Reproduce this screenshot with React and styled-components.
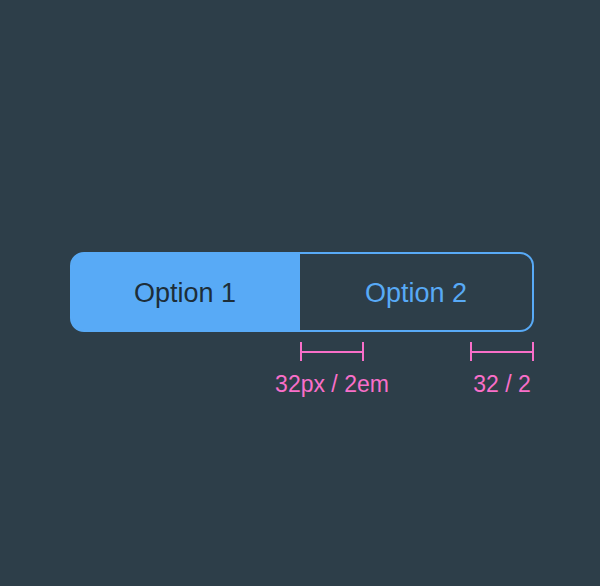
import React from 'react';
import styled, { createGlobalStyle } from 'styled-components';

const blue = '#58aaf6';
const pink = '#f96fc9';
const bg = '#2d3e49';

const Global = createGlobalStyle`
  html, body {
    margin: 0;
    padding: 0;
    background: ${bg};
  }
  body {
    font-family: "Liberation Sans", Arial, sans-serif;
  }
`;

const Page = styled.div`
  width: 600px;
  height: 586px;
  box-sizing: border-box;
  padding: 252px 0 0 70px;
  display: flex;
  flex-direction: column;
  align-items: flex-start;
`;

const Segmented = styled.div`
  display: flex;
  width: 464px;
  height: 80px;
`;

const Segment = styled.button`
  box-sizing: border-box;
  height: 80px;
  margin: 0;
  padding: 3px 0 0;
  font-family: inherit;
  font-size: 27px;
  border: 2px solid ${blue};
  display: flex;
  align-items: center;
  justify-content: center;
  cursor: pointer;
  background: ${p => (p.$active ? blue : 'transparent')};
  color: ${p => (p.$active ? '#1d2e39' : blue)};
  width: ${p => p.$width}px;
  border-radius: ${p => (p.$first ? '14px 0 0 14px' : '0 14px 14px 0')};
  ${p => !p.$first && 'border-left: none;'}
`;

const Measures = styled.div`
  display: flex;
  width: 464px;
  padding-left: 230px;
  box-sizing: border-box;
  margin-top: 10px;
`;

const Measure = styled.div`
  width: 64px;
  display: flex;
  flex-direction: column;
  align-items: center;
  ${p => p.$end && 'margin-left: auto;'}
`;

const Bar = styled.span`
  display: block;
  box-sizing: border-box;
  width: 64px;
  height: 19px;
  border-left: 2px solid ${pink};
  border-right: 2px solid ${pink};
  background: linear-gradient(${pink}, ${pink}) center / 100% 2px no-repeat;
`;

const Label = styled.span`
  margin-top: 10px;
  font-size: 23px;
  line-height: 26px;
  color: ${pink};
  white-space: nowrap;
`;

export default function App() {
  return (
    <Page>
      <Global />
      <Segmented>
        <Segment $active $first $width={230}>Option 1</Segment>
        <Segment $width={234}>Option 2</Segment>
      </Segmented>
      <Measures>
        <Measure>
          <Bar />
          <Label>32px / 2em</Label>
        </Measure>
        <Measure $end>
          <Bar />
          <Label>32 / 2</Label>
        </Measure>
      </Measures>
    </Page>
  );
}
